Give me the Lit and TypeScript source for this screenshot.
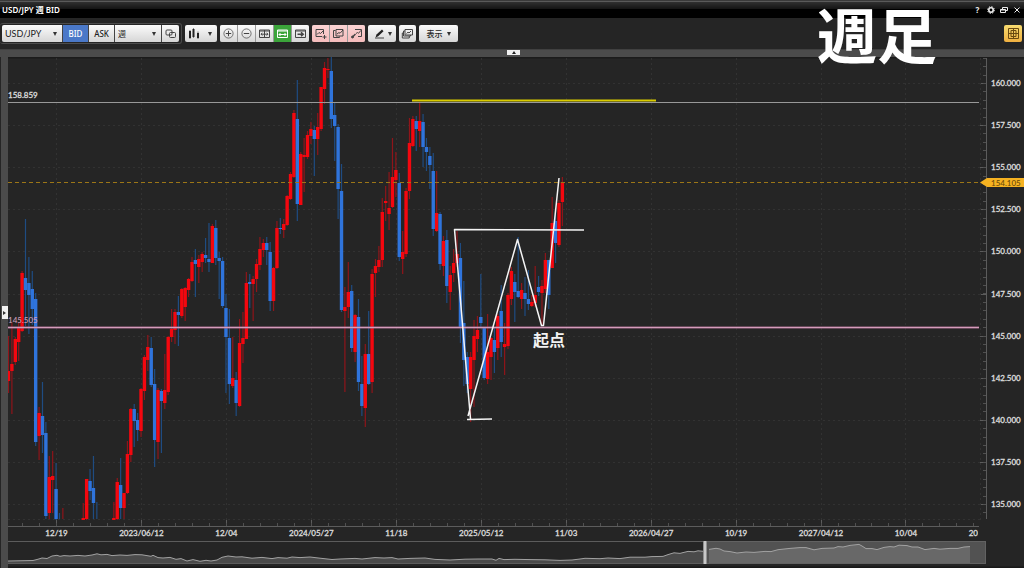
import { LitElement, html, svg, css } from "lit";
import { customElement, state } from "lit/decorators.js";

// Weekly bars: slot, direction (r = up, b = down), body top, body bottom, high, low
const BARS = `0r371,381,336,393 1r364,371,323,414 2r339,362,337,365 3r328,342,323,361 4r273,331,271,332
5b278,290,219,326 6b283,295,257,334 7b289,309,271,325 8b299,442,293,446 9r413,436,407,460
10b416,435,382,453 11b433,516,422,519 12r477,513,456,519 13r476,480,451,513 14b489,519,463,520
15b513,513,513,519 16r508,508,508,519 22r518,520,503,520 23r479,519,479,520 24b481,491,469,500
25b488,503,456,519 26b502,502,502,519 31r518,520,502,520 32r482,519,478,520 33b485,508,458,519
34r493,508,493,519 35r454,493,441,494 36r409,455,408,462 37b409,421,404,447 38b420,430,413,441
39r389,431,388,437 40r357,391,355,400 41r347,360,335,371 42b348,385,337,387 43b384,440,369,467
44r390,442,388,459 45b391,401,389,453 46r390,403,354,409 47r337,392,336,395 48r329,337,309,342
49r312,330,309,344 50b312,315,296,346 51r289,316,288,318 52r288,307,287,321 53r279,290,278,297
54r262,281,257,282 55b260,264,249,297 56r259,267,255,283 57r254,262,252,272 58b255,258,238,263
59b259,262,223,272 60r226,263,224,263 61b228,258,220,265 62b258,261,252,299 63b261,306,257,308
64b308,337,294,393 65b338,384,309,404 66r378,386,337,388 67b380,403,372,416 68r343,406,319,407
69r338,344,312,363 70r283,339,272,339 71b282,284,274,308 72r279,284,276,321 73r264,279,259,292
74r249,265,237,270 75r243,250,239,257 76b243,250,237,265 77b252,301,242,311 78r268,301,267,311
79r228,268,221,269 80b228,229,218,234 81r224,230,219,238 82r196,225,195,226 83r174,199,172,200
84r113,177,110,178 85b119,204,80,221 86r154,205,152,205 87r155,157,138,192 88r135,157,131,159
89r129,136,122,144 90b130,139,126,176 91r127,139,113,155 92r87,129,87,131 93r68,89,62,104
94r69,70,58,78 95b71,119,57,128 96b115,126,103,161 97b127,189,124,219 98b191,310,164,312
99r307,311,287,392 100r292,307,262,318 101b291,348,285,352 102r315,352,314,362 103b317,382,299,391
104b384,406,356,416 105r354,408,344,427 106b354,384,311,385 107r274,382,269,393 108r266,273,259,297
109r260,267,246,272 110r212,260,198,267 111r201,203,186,221 112r208,214,172,230 113r177,207,138,208
114r170,180,152,197 115b183,257,173,261 116r252,259,231,274 117r191,254,188,257 118r143,191,118,199
119r119,146,116,147 120b121,129,116,151 121r121,131,103,147 122b122,147,114,167 123b147,152,138,171
124b156,165,147,189 125b171,229,153,236 126r213,231,171,232 127b214,264,212,270 128r241,266,236,276
129b240,286,230,303 130r275,292,266,310 131r263,273,249,282 132r254,263,231,267 133b258,327,243,343
134b323,360,281,386 135b357,384,352,393 136r357,389,352,422 137r336,360,320,407 138r330,339,316,352
139b317,323,274,327 140b328,378,328,380 141r352,379,314,384 142r338,357,337,380 143b340,352,327,373
144r316,348,314,360 145b311,342,285,357 146r344,347,323,375 147r295,346,293,349 148r271,299,267,305
149b282,292,274,322 150b291,297,237,298 151r290,299,283,309 152b293,299,277,316 153b299,304,270,310
154r302,306,295,307 155r295,303,266,307 156b287,292,276,296 157r286,293,280,326 158r260,289,253,293
159b260,295,260,309 160r223,268,197,268 161b221,243,210,263 162r203,245,200,247 163r182,202,177,226`
  .split(/\s+/)
  .map((t) => {
    const m = /^(\d+)([rb])(.*)$/.exec(t)!;
    const [top, bottom, high, low] = m[3].split(",").map(Number);
    return { slot: +m[1], kind: m[2] === "r" ? "up" : "down", top, bottom, high, low };
  });

const slotX = (slot: number) => 8.4 + slot * 3.398;
const priceY = (price: number) => 83 + (160 - price) * 16.84;

const DATES = ["12/19", "2023/06/12", "12/04", "2024/05/27", "11/18", "2025/05/12", "11/03", "2026/04/27", "10/19", "2027/04/12", "10/04", "2028/03/27"];
const PRICES = Array.from({ length: 11 }, (_, i) => 160 - i * 2.5);

const HISTORY = "8,561 33,560.5 37,559.5 42,558 47,558.5 52,556 57,555.3 60,556.3 64,555.6 70,556 78,555.4 85,556 92,555 97,553.8 101,554.8 107,554.4 112,555.6 120,555 127,555.4 135,554.6 142,554.8 151,556.3 153,555.3 158,557.6 163,558 170,557.4 176,559.3 181,558.6 187,561 193,559.6 200,561.3 206,560.3 211,561 217,560 222,557.3 228,556 236,557 242,556.8 252,558.2 262,557.4 272,558.6 278,557.6 287,558.2 292,557 300,557.6 310,557 320,558.2 332,559.5 340,559 355,558.4 362,559 375,557.6 384,558 392,557.6 398,559 410,558.4 425,558 435,559.4 450,560 465,559.2 478,559 492,559 496,560.3 499,558.4 504,559.6 515,559.3 530,559.6 545,559.8 560,560.4 572,560 580,559 585,558.3 600,558.7 608,558 620,558.6 630,557.2 645,557.2 652,556.6 663,556.4 668,554.6 674,552.8 680,553.4 683,552.6 688,551.4 694,551.8 698,550.8 704,551.4";
const WINDOWED = "709,549.4 716,548.3 720,549 724,551 730,551.6 737,553 746,552 754,552.4 765,551.4 771,551.6 778,549.7 790,548.4 800,547.6 806,547.6 814,549.8 822,548.4 834,548 838,546.6 843,547 850,545.4 859,544.4 862,546 866,548.6 872,548.6 877,549.6 884,547.4 890,546.6 894,547 899,545.2 907,545.6 912,547 918,547 925,549.6 934,548.4 940,549.2 950,548.4 958,548.4 964,547 970,546.6";

const icons = {
  link: svg`<rect x="2" y="3" width="6" height="5" rx="1"/><rect x="5.500" y="5.500" width="6" height="5" rx="1"/>`,
  plus: svg`<circle cx="6.500" cy="6.500" r="4.600" class="thin"/><path d="M6.500 3.800v5.400M3.800 6.500h5.400"/>`,
  minus: svg`<circle cx="6.500" cy="6.500" r="4.600" class="thin"/><path d="M3.800 6.500h5.400"/>`,
  split: svg`<path d="M1.500 3h10v7.500h-10zM1.500 4h10M6.500 3v7.500M3 7.200h7M4.300 6 3 7.200l1.300 1.300M8.700 6 10 7.200 8.700 8.500"/>`,
  fit: svg`<path d="M1.500 3h10v7.500h-10zM1.500 4h10M3 7.500h7M4.500 6 3 7.500 4.500 9M8.500 6 10 7.500 8.500 9"/>`,
  next: svg`<path d="M1.500 3h10v7.500h-10zM1.500 4h10"/><path d="M3.500 7.200h5M7 5.300l2.200 1.900L7 9.100" stroke-width="1.500"/>`,
  add: svg`<path d="M8 9.500H2v-7h7.500V7M3 7.500l2-2 1.500 1L9 4M10.500 8v4M8.500 10h4"/>`,
  copy: svg`<path d="M3.500 3.500h-2v7h6v-1M4 2.500h7v6.500H4zM5 7l2-1.500 1 .8L11 3"/>`,
  pick: svg`<path d="M5 2.500h6.500v7H8M6 6.500l1.500-1 1 .8 2.500-3"/><path d="m2.500 10 3-3" stroke-width="1.500"/><circle cx="2.500" cy="10" r="1" fill="currentColor"/>`,
  pencil: svg`<path d="M2.500 10.500 3.500 7.500 9 2.500l1.500 1.700-5.300 5z" fill="#222" stroke="none"/><path d="M2 11h9"/>`,
  layers: svg`<path d="M4 2.500h7.500V8H4zM4 4H2.500v5H9.500V8M2.500 6H1.300v5h7V9M5.500 6.500l1.500-1.300 1 .8L10 4"/>`,
  grid: svg`<path d="M1.500 1.500h10v10h-10zM6.500 1.500v10M1.500 6.500h10M4 3.500h5v6H4z"/>`,
};

@customElement("icon-glyph")
class IconGlyph extends LitElement {
  static properties = { name: {} };
  declare name: keyof typeof icons;
  static styles = css`
    :host { display: block; width: 13px; height: 13px; }
    svg { display: block; width: 100%; height: 100%; fill: none; stroke: currentColor; }
    .thin { stroke-width: 0.7; }
  `;
  render() {
    return html`<svg viewBox="0 0 13 13" aria-hidden="true">${icons[this.name]}</svg>`;
  }
}

@customElement("price-chart")
class PriceChart extends LitElement {
  static styles = css`
    :host { display: block; }
    svg { display: block; width: 100%; height: auto; }
    text { font: 500 8px "Lato", "Noto Sans CJK JP", sans-serif; fill: #dadada; stroke: #dadada; stroke-width: 0.3px; }
    .mid { text-anchor: middle; }
    .grid { stroke: #323232; stroke-dasharray: 2 3; fill: none; }
    .axis { stroke: #5c5c5c; fill: none; }
    .tick { stroke: #505050; fill: none; }
    .up { fill: #f4070f; }
    .down { fill: #2f74dc; }
    .wick.up { fill: #8f151a; }
    .wick.down { fill: #1f4c82; }
    .level { stroke: #999; }
    .pink { stroke: #a86c8e; stroke-width: 2; }
    .pink-core { stroke: #d49cbb; stroke-width: 1; }
    .pink-label { fill: #d0a0ba; stroke: none; }
    .target { stroke: #d9cc00; stroke-width: 2; }
    .current { stroke: #9c7617; stroke-dasharray: 4 3; }
    .tag { fill: #f6b221; }
    .tag-label { fill: #66490a; stroke: none; }
    .drawn { stroke: #f4f4f4; stroke-width: 1.500; fill: none; stroke-linejoin: round; }
    .note { font: 700 16px "Noto Sans CJK JP", sans-serif; fill: #f2f2f2; stroke: none; }
    .trend { stroke: #a2a2a2; fill: none; }
    .mass { fill: #4a4a4a; }
    .window { fill: #525252; stroke: #626262; }
    .window-mass { fill: #686868; }
  `;
  render() {
    const minorX = Array.from({ length: 57 }, (_, i) => slotX(4 + i * 5)).filter((x) => x < 979);
    const minorY = Array.from({ length: 55 }, (_, i) => 57.7 + i * 8.42).filter((y) => y < 519);
    return html`
      <svg viewBox="8 57 1016 511" role="img" aria-label="USD/JPY 週足 BID">
        <defs>
          <clipPath id="plot"><rect x="8" y="57" width="972" height="463" /></clipPath>
          <clipPath id="dates"><rect x="8" y="520" width="970" height="22" /></clipPath>
        </defs>
        <rect x="8" y="57" width="1016" height="1.500" fill="#1b1b1b" />
        ${PRICES.map((p) => svg`
          <path class="grid" d="M8 ${Math.round(priceY(p)) + 0.5}H980" />
          <path class="axis" d="M980 ${Math.round(priceY(p)) + 0.5}h6" />
          <text x="991" y=${Math.round(priceY(p)) + 3}>${p.toFixed(3)}</text>`)}
        <path class="grid" d="M8 519.5H980M980.500 58V520" />
        <g clip-path="url(#dates)">
          ${DATES.map((d, i) => svg`
            <path class="axis" d="M${Math.round(slotX(14 + i * 25)) + 0.5} 520v6" />
            <text class="mid" x=${slotX(14 + i * 25) + 0.5} y="536">${d}</text>`)}
        </g>
        ${DATES.slice(0, 11).map((_, i) => svg`<path class="grid" d="M${Math.round(slotX(14 + i * 25)) + 0.5} 58V520" />`)}
        ${minorX.map((x) => svg`<path class="tick" d="M${Math.round(x) + 0.5} 523v3" />`)}
        ${minorY.map((y) => svg`<path class="tick" d="M983 ${Math.round(y) + 0.5}h3" />`)}
        <path class="axis" d="M986.500 58V519M8 526.500H979" />
        <g clip-path="url(#plot)">
          ${BARS.map((b) => svg`<rect class="wick ${b.kind}" x=${slotX(b.slot) - 0.5} y=${b.high} width="1.200" height=${b.low - b.high} />`)}
          ${BARS.map((b) => svg`<rect class=${b.kind} x=${slotX(b.slot) - 1.6} y=${b.top} width="3.400" height=${b.bottom - b.top} />`)}
        </g>
        <path class="level" d="M8 102.500H979" />
        <path class="pink" d="M8 327.500H979" />
        <path class="pink-core" d="M8 327.500H979" />
        <path class="current" d="M8 182.500H980" />
        <text x="8" y="98">158.859</text>
        <text class="pink-label" x="8" y="323">145.505</text>
        <path class="target" d="M412 100.500H656" />
        <path class="tag" d="M980 182.500 987 178H1024V187H987Z" />
        <text class="tag-label" x="991" y="186">154.105</text>
        <path class="drawn" d="M584 230 454.500 229.500 470.500 419M468 416 517.500 239.500 541.500 325.500H543.500L559 178M467 419.500 492 419" />
        <text class="note" x="533" y="346">起点</text>

        <polygon class="mass" points="8,563 ${HISTORY} 704,563" />
        <polyline class="trend" points=${HISTORY} />
        <path class="axis" d="M8 541.500H986M8 563.500H986" />
        <rect class="window" x="705.500" y="541.500" width="280" height="22" />
        <polygon class="window-mass" points="709,563 ${WINDOWED} 970,563" />
        <polyline class="trend" points=${WINDOWED} />
        <rect x="703" y="541" width="4" height="23" fill="#909090" />
        <rect x="704" y="541" width="2" height="23" fill="#c8c8c8" />
        <rect x="8" y="566.500" width="1016" height="1.500" fill="#191919" />
      </svg>`;
  }
}

@customElement("app-root")
class AppRoot extends LitElement {
  @state() private side = "BID";

  static styles = css`
    :host { display: block; position: relative; min-height: 100vh; background: #252525; color: #fff; font-family: "Noto Sans", "Noto Sans CJK JP", sans-serif; }
    * { box-sizing: border-box; }
    button, select { font: inherit; color: #222; margin: 0; padding: 0; border: 0; background: none; border-radius: 0; appearance: none; }
    .title { display: flex; align-items: center; justify-content: space-between; height: 18px; padding: 0 2px; font-size: 8px; border-top: 1px solid #3a3a3a; background: linear-gradient(#5a5a5a 0 1px, #303030 1px, #141414 8px, #000 8px); }
    .title h1 { margin: 0; font-size: 8px; font-weight: 600; line-height: 12px; }
    .wins { display: flex; gap: 2px; }
    .wins button { display: grid; place-items: center; width: 11px; height: 12px; color: #eee; font-weight: 700; font-size: 8px; }
    .wins svg { width: 8px; height: 8px; fill: none; stroke: #eee; }
    .tools { display: flex; align-items: center; gap: 3px; height: 31px; padding: 0 2px 0 0; font-size: 8px; }
    .group { display: flex; height: 17px; gap: 1px; border-radius: 2px; overflow: hidden; background: #999; }
    .framed { display: flex; padding: 1px 2px; border: 1px solid #4c4c4c; border-left: 0; border-radius: 3px; }
    .framed .group { background: #444; }
    .key { display: grid; grid-auto-flow: column; place-items: center; place-content: center; width: 17px; background: linear-gradient(#fbfbfb, #d6d6d6); color: #444; }
    .wide { width: 25px; font-size: 8px; font-weight: 500; color: #222; }
    .on { background: #4a78c8; color: #fff; }
    .green { background: #3ba43a; color: #fff; }
    .rose { background: linear-gradient(#fbd3d3, #f5bcbc); }
    .pen { width: 28px; gap: 2px; }
    .show { width: 39px; gap: 4px; font-size: 8px; font-weight: 500; color: #222; }
    .pick { display: grid; align-items: center; background: linear-gradient(#fbfbfb, #d6d6d6); }
    .pick > * { grid-area: 1 / 1; }
    .pick select { width: 100%; height: 17px; padding-left: 3px; }
    .pair { width: 60px; }
    .pair select { font-size: 9px; font-family: "Lato", sans-serif; }
    .term { width: 46px; }
    .style { width: 32px; }
    .style svg { width: 12px; height: 12px; margin-left: 3px; }
    .arrow { justify-self: end; margin-right: 5px; width: 0; border: 2px solid transparent; border-top: 4px solid #333; border-bottom: 0; pointer-events: none; }
    .key .arrow { margin: 0; }
    .gold { width: 18px; height: 17px; margin-left: auto; border-radius: 2px; background: linear-gradient(#f8dc70, #f0b040); color: #6b4a10; }
    .rail { display: flex; justify-content: center; height: 8px; padding-left: 3px; background: #4b4b4b; border-top: 1px solid #404040; }
    .fold { display: grid; place-items: center; width: 13px; height: 5px; background: #f0f0f0; }
    .fold i { border: 2px solid transparent; border-bottom: 3px solid #222; border-top: 0; }
    .body { display: flex; }
    .side { display: grid; place-items: center; width: 8px; background: #4b4b4b; border-left: 1px solid #252525; }
    .side button { display: grid; place-items: center; width: 6px; height: 13px; background: #f0f0f0; }
    .side i { border: 2px solid transparent; border-left: 3px solid #333; border-right: 0; }
    price-chart { flex: 1; min-width: 0; }
    .caption { position: absolute; top: 0; right: 87px; margin: 0; font: 700 60px/66px "Noto Sans CJK JP", sans-serif; color: #fff; pointer-events: none; }
  `;

  private key(name: string, label: string, tone = "") {
    return html`<button class="key ${tone}" aria-label=${label}><icon-glyph name=${name}></icon-glyph></button>`;
  }

  render() {
    return html`
      <header class="title">
        <h1>USD/JPY 週 BID</h1>
        <div class="wins">
          <button aria-label="ヘルプ">?</button>
          <button aria-label="設定"><svg viewBox="0 0 8 8"><circle cx="4" cy="4" r="2.200" stroke-width="1.600" /><circle cx="4" cy="4" r="3.400" stroke-width="1" stroke-dasharray="1.300 1.370" /></svg></button>
          <button aria-label="元に戻す"><svg viewBox="0 0 8 8"><path d="M2.500 3V1.500h5v3H6M.5 3.500h5v3h-5zM.5 4h5" /></svg></button>
          <button aria-label="閉じる"><svg viewBox="0 0 8 8"><path d="m1.500 1.500 5 5m0-5-5 5" /></svg></button>
        </div>
      </header>
      <nav class="tools">
        <div class="framed">
          <div class="group">
            <label class="pick pair"><select aria-label="通貨ペア"><option>USD/JPY</option></select><i class="arrow"></i></label>
            ${["BID", "ASK"].map((s) => html`<button class="key wide ${this.side === s ? "on" : ""}" @click=${() => (this.side = s)}>${s}</button>`)}
            <label class="pick term"><select aria-label="足種"><option>週</option></select><i class="arrow"></i></label>
            ${this.key("link", "連動")}
          </div>
        </div>
        <div class="group">
          <button class="pick style" aria-label="チャート種類">
            <svg viewBox="0 0 12 12"><path d="M1 3h2v7H1zM4.500 1h2v8h-2zM9 5h2v5H9zM1.700 2h.6v9h-.6zM5.300 0h.5v10h-.5zM9.700 3.500h.6V11h-.6z" fill="#222" /></svg>
            <i class="arrow"></i>
          </button>
        </div>
        <div class="group">
          ${this.key("plus", "拡大")}${this.key("minus", "縮小")}${this.key("split", "幅調整")}${this.key("fit", "自動調整", "green")}${this.key("next", "最新へ")}
        </div>
        <div class="group">
          ${this.key("add", "追加", "rose")}${this.key("copy", "複製", "rose")}${this.key("pick", "選択", "rose")}
        </div>
        <div class="group"><button class="key pen" aria-label="描画"><icon-glyph name="pencil"></icon-glyph><i class="arrow"></i></button></div>
        <div class="group">${this.key("layers", "重ねる")}</div>
        <div class="group"><button class="key show">表示<i class="arrow"></i></button></div>
        ${this.key("grid", "分割", "gold")}
      </nav>
      <div class="rail"><button class="fold" aria-label="折りたたむ"><i></i></button></div>
      <main class="body">
        <div class="side"><button aria-label="パネルを開く"><i></i></button></div>
        <price-chart></price-chart>
      </main>
      <p class="caption">週足</p>
    `;
  }
}
